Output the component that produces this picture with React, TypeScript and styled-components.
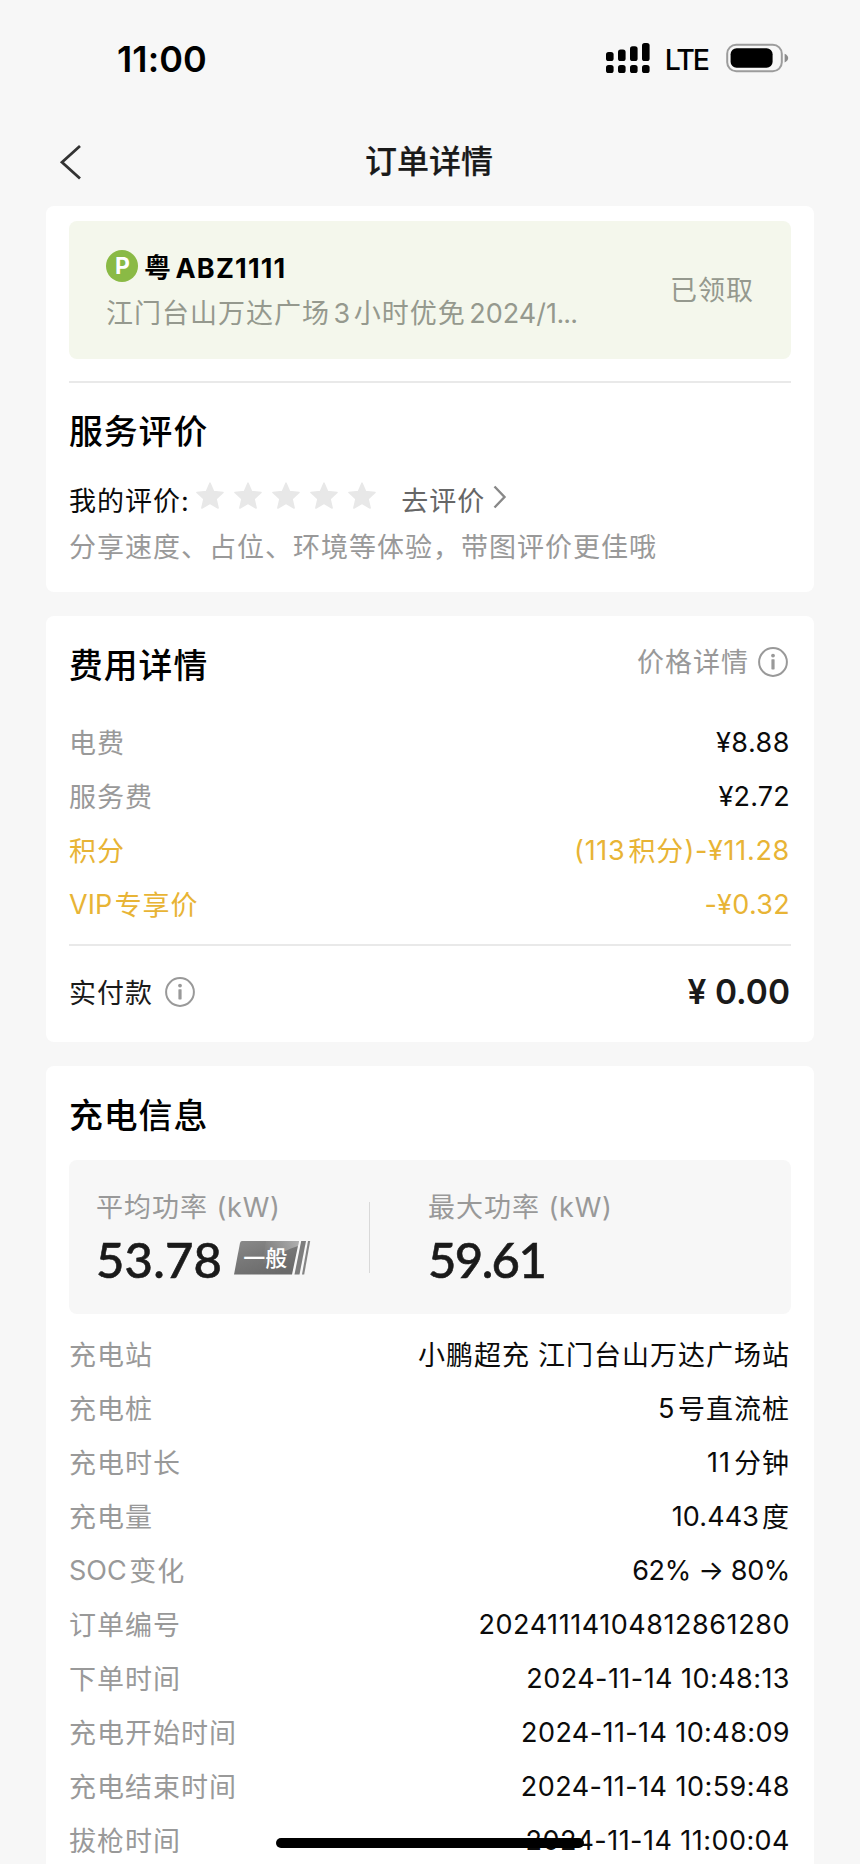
import React from "react";
import styled, { createGlobalStyle } from "styled-components";

const GlobalStyle = createGlobalStyle`
  * { box-sizing: border-box; }
  body {
    margin: 0;
    background: #f7f7f7;
    color: #0b0b0b;
    font-family: Inter, "Noto Sans CJK SC", sans-serif;
    font-size: 27px;
    -webkit-font-smoothing: antialiased;
  }
  svg { display: block; flex: none; }
`;

const Screen = styled.div`
  position: relative;
  width: 860px;
  height: 1864px;
  overflow: hidden;
  background: #f7f7f7;
`;

const StatusBar = styled.header`
  height: 116px;
  padding: 0 71px 0 117px;
  display: flex;
  align-items: center;
  justify-content: space-between;
`;

const Clock = styled.span`
  font-size: 36px;
  font-weight: 600;
  color: #000;
  letter-spacing: 0.1px;
  padding-top: 2px;
`;

const StatusIcons = styled.div`
  display: flex;
  align-items: center;
`;

const Network = styled.span`
  font-size: 28.5px;
  font-weight: 500;
  letter-spacing: -2px;
  color: #000;
  margin: 3px 18px 0 15px;
`;

const NavBar = styled.nav`
  height: 90px;
  display: grid;
  grid-template-columns: 200px 1fr 200px;
  align-items: center;
`;

const BackButton = styled.button`
  border: 0;
  background: none;
  padding: 2px 0 0 59px;
  text-align: left;
  line-height: 0;
`;

const NavTitle = styled.h1`
  margin: 0;
  padding: 2px 2px 0 0;
  text-align: center;
  font-size: 32px;
  font-weight: 500;
  line-height: 88px;
  color: #1a1a1a;
  -webkit-text-stroke: 0.2px #1a1a1a;
`;

const Card = styled.section<{ $height: number }>`
  height: ${(p) => p.$height}px;
  margin: 0 46px 24px;
  padding: 0 23px;
  background: #fff;
  border-radius: 8px;
`;

const CardTitle = styled.h2`
  margin: 0;
  font-size: 33.8px;
  font-weight: 500;
  letter-spacing: 1px;
  line-height: 50px;
  color: #000;
`;

const Divider = styled.hr`
  border: 0;
  margin: 0;
  height: 2px;
  background: #e9e9e9;
`;

const Coupon = styled.div`
  height: 138px;
  margin-bottom: 22px;
  padding: 0 37px;
  border-radius: 8px;
  background: #f4f7ec;
  display: flex;
  justify-content: space-between;
  align-items: center;
  color: #95998e;
`;

const CouponBody = styled.div`
  display: flex;
  flex-direction: column;
  padding-top: 1px;
`;

const CouponState = styled.span`
  padding-bottom: 3px;
`;

const Plate = styled.div`
  display: flex;
  align-items: center;
  gap: 6px;
  height: 45px;
  margin-bottom: 1px;
  font-weight: 700;
  color: #000;
`;

const ParkingMark = styled.span`
  width: 32px;
  height: 32px;
  border-radius: 50%;
  background: #8aba45;
  color: #fff;
  font-size: 23px;
  line-height: 32px;
  text-align: center;
  padding-left: 1px;
`;

const CouponNote = styled.div`
  line-height: 48px;
  white-space: nowrap;
`;

const RatingRow = styled.div`
  display: flex;
  align-items: center;
  height: 46px;
  color: #0b0b0b;
`;

const Stars = styled.div`
  display: flex;
  gap: 10px;
  margin: -6px 25px 0 7px;
`;

const RateLink = styled.a`
  display: flex;
  align-items: center;
  gap: 8px;
  color: #666;

  svg {
    margin-top: -3px;
    margin-bottom: 1px;
  }
`;

const Hint = styled.p`
  margin: 0;
  line-height: 52px;
  color: #999;
`;

const CardHead = styled.div`
  display: flex;
  justify-content: space-between;
  align-items: flex-start;
  padding: 25px 3px 0 0;
  height: 100px;
`;

const PriceLink = styled.a`
  display: flex;
  align-items: center;
  gap: 9px;
  height: 42px;
  line-height: 40px;
  padding-bottom: 1px;
  color: #999;

  > span {
    padding-top: 2px;
  }
`;

const Row = styled.div<{ $gold?: boolean }>`
  display: flex;
  justify-content: space-between;
  height: 54px;
  line-height: 54px;
  padding: 0 1px 0 0;
  color: ${(p) => (p.$gold ? "#e8b435" : "#0b0b0b")};
`;

const RowLabel = styled.span<{ $muted?: boolean }>`
  color: ${(p) => (p.$muted ? "#999" : "inherit")};
`;

const TotalRow = styled.div`
  display: flex;
  justify-content: space-between;
  align-items: center;
  height: 91px;
  padding: 0 1px 0 0;
  color: #1a1a1a;
`;

const TotalLabel = styled.span`
  display: flex;
  align-items: center;
  gap: 12px;
`;

const Total = styled.strong`
  font-size: 33.5px;
  font-weight: 600;
`;

const PowerPanel = styled.div`
  display: grid;
  grid-template-columns: 300px 1px 1fr;
  height: 154px;
  margin-bottom: 14px;
  border-radius: 8px;
  background: #f7f7f7;
`;

const PowerSplit = styled.i`
  height: 71px;
  margin-top: 42px;
  background: #d9d9d9;
`;

const PowerCell = styled.div<{ $left: number }>`
  padding: 25px 0 0 ${(p) => p.$left}px;
`;

const PowerLabel = styled.div`
  line-height: 46px;
  color: #999;
  white-space: nowrap;
`;

const PowerValue = styled.div<{ $tracking?: number }>`
  display: flex;
  align-items: center;
  gap: 12px;
  height: 56px;
  font-family: Lato, sans-serif;
  font-size: 49px;
  font-weight: 500;
  letter-spacing: ${(p) => p.$tracking ?? 0.2}px;
  color: #1a1a1a;
  -webkit-text-stroke: 0.6px #1a1a1a;
`;

const LevelBadge = styled.span`
  position: relative;
  display: block;
  width: 77px;
  height: 34px;
  margin-bottom: 2px;
  letter-spacing: 0;
  -webkit-text-stroke: 0;
`;

const LevelText = styled.span`
  position: absolute;
  left: 9px;
  top: 0;
  line-height: 31px;
  font-family: "Noto Sans CJK SC", sans-serif;
  font-size: 22px;
  font-weight: 500;
  color: #fff;
`;

const HomeIndicator = styled.div`
  position: absolute;
  left: 276px;
  bottom: 16px;
  width: 308px;
  height: 10px;
  border-radius: 5px;
  background: #000;
`;

const Run = styled.span<{ $spacing: number; $before: number; $han?: boolean }>`
  letter-spacing: ${(p) => p.$spacing}px;
  margin-left: ${(p) => p.$before}px;
  white-space: pre;

  ${Row} & {
    vertical-align: ${(p) => (p.$han ? "-1px" : "baseline")};
  }
`;

/* Splits a string into Han and Latin runs, each with its own tracking. */
function Mixed({ text, latin = 0.5, gap = 3 }: { text: string; latin?: number; gap?: number }) {
  const runs = text.match(/[\u3000-\u9fff\uff00-\uffef]+|[^\u3000-\u9fff\uff00-\uffef]+/g) || [];
  return (
    <span>
      {runs.map((run, i) => {
        const han = /[\u3000-\u9fff\uff00-\uffef]/.test(run);
        const prev = runs[i - 1] || " ";
        const join = i > 0 && /[0-9A-Z]/.test((han ? prev[prev.length - 1] : run[0]) || "");
        return (
          <Run key={i} $han={han} $spacing={han ? 1 : latin} $before={join ? gap : 0}>
            {run}
          </Run>
        );
      })}
    </span>
  );
}

function InfoIcon() {
  return (
    <svg width="30" height="30" viewBox="0 0 30 30">
      <circle cx="15" cy="15" r="13.9" fill="none" stroke="#999" strokeWidth="2" />
      <circle cx="15" cy="8.600" r="1.900" fill="#999" />
      <rect x="13.400" y="12.200" width="3.200" height="10.200" rx="0.600" fill="#999" />
    </svg>
  );
}

function Star() {
  return (
    <svg width="28" height="28" viewBox="0 0 28 28">
      <path
        d="M14 1.200 17.600 9.600 27 10.500 20 16.900 22.100 26 14 21.400 5.900 26 8 16.900 1 10.500 10.400 9.600Z"
        fill="#e8e8e8"
        stroke="#e8e8e8"
        strokeWidth="1.600"
        strokeLinejoin="round"
      />
    </svg>
  );
}

function Signal() {
  const tops = [9, 6.5, 3.2, 0];
  return (
    <svg width="44" height="30" viewBox="0 0 44 30">
      {tops.map((top, i) => (
        <g key={i}>
          <rect x={i * 12} y={top} width="7.600" height={18 - top} rx="2.600" />
          <rect x={i * 12} y="22" width="7.600" height="8" rx="2.600" />
        </g>
      ))}
    </svg>
  );
}

function Battery() {
  return (
    <svg width="63" height="30" viewBox="0 0 63 30">
      <rect x="1.200" y="1.700" width="54.600" height="26.600" rx="9" fill="none" stroke="#9c9c9c" strokeWidth="2" />
      <rect x="4.600" y="5.200" width="42" height="19.600" rx="6" />
      <path d="M58.600 10.700c2.400 1 3.600 2.600 3.600 4.400s-1.200 3.400-3.600 4.400Z" fill="#8c8c8c" />
    </svg>
  );
}

function Level() {
  return (
    <LevelBadge>
      <svg width="77" height="34" viewBox="0 0 77 34">
        <defs>
          <linearGradient id="level" x1="0" y1="0" x2="0.6" y2="1">
            <stop offset="0" stopColor="#8a8a8a" />
            <stop offset="0.5" stopColor="#787878" />
            <stop offset="1" stopColor="#6a6a6a" />
          </linearGradient>
          <linearGradient id="gloss" x1="0" y1="0" x2="1" y2="0">
            <stop offset="0" stopColor="#fff" stopOpacity="0" />
            <stop offset="1" stopColor="#fff" stopOpacity="0.4" />
          </linearGradient>
        </defs>
        <path d="M8 0H65L58 33.500H0L6 2Q6.500 0 8 0Z" fill="url(#level)" />
        <path d="M32 0H65L64 5C54 8 46 12 38 18L28 24Z" fill="url(#gloss)" />
        <path d="M67.200 0H72L65.500 33.500H60.500Z" fill="#7d7d7d" />
        <path d="M74 0H76.200L70.200 33.500H68Z" fill="#858585" />
      </svg>
      <LevelText>一般</LevelText>
    </LevelBadge>
  );
}

type Entry = { label: string; value: string; gold?: boolean; tracking?: number };

const fees: Entry[] = [
  { label: "电费", value: "¥8.88" },
  { label: "服务费", value: "¥2.72", tracking: 0.2 },
  { label: "积分", value: "(113积分)-¥11.28", gold: true, tracking: 0.7 },
  { label: "VIP专享价", value: "-¥0.32", gold: true, tracking: 0.3 },
];

const details: Entry[] = [
  { label: "充电站", value: "小鹏超充 江门台山万达广场站" },
  { label: "充电桩", value: "5号直流桩" },
  { label: "充电时长", value: "11分钟", tracking: 1 },
  { label: "充电量", value: "10.443度", tracking: 0.1 },
  { label: "SOC变化", value: "62% → 80%", tracking: -0.35 },
  { label: "订单编号", value: "20241114104812861280", tracking: 0.55 },
  { label: "下单时间", value: "2024-11-14 10:48:13", tracking: 0.45 },
  { label: "充电开始时间", value: "2024-11-14 10:48:09", tracking: 0.4 },
  { label: "充电结束时间", value: "2024-11-14 10:59:48", tracking: 0.45 },
  { label: "拔枪时间", value: "2024-11-14 11:00:04", tracking: 0.45 },
];

function EntryRow({ entry }: { entry: Entry }) {
  return (
    <Row $gold={entry.gold}>
      <RowLabel $muted={!entry.gold}>
        <Mixed text={entry.label} latin={0} gap={2.5} />
      </RowLabel>
      <Mixed text={entry.value} latin={entry.tracking} />
    </Row>
  );
}

const ServiceCard = styled(Card)`
  padding-top: 15px;
`;

const RatingTitle = styled(CardTitle)`
  margin: 24px 0 19px;
`;

const Fees = styled.div`
  margin-bottom: 12px;
`;

const ChargeHead = styled.div`
  height: 94px;
  padding-top: 25px;
`;

export default function App() {
  return (
    <Screen>
      <GlobalStyle />
      <StatusBar>
        <Clock>11:00</Clock>
        <StatusIcons>
          <Signal />
          <Network>LTE</Network>
          <Battery />
        </StatusIcons>
      </StatusBar>
      <NavBar>
        <BackButton aria-label="返回">
          <svg width="24" height="36" viewBox="0 0 24 36">
            <path d="M21 2 3 18.200 21 34.500" fill="none" stroke="#333" strokeWidth="2.800" />
          </svg>
        </BackButton>
        <NavTitle>订单详情</NavTitle>
      </NavBar>

      <ServiceCard $height={386}>
        <Coupon>
          <CouponBody>
            <Plate>
              <ParkingMark>P</ParkingMark>
              <Mixed text="粤ABZ1111" latin={1.2} gap={3.5} />
            </Plate>
            <CouponNote>
              <Mixed text="江门台山万达广场3小时优免2024/1" latin={0} gap={3.5} />
              <Run $spacing={-0.9} $before={-0.5}>...</Run>
            </CouponNote>
          </CouponBody>
          <CouponState>
            <Mixed text="已领取" />
          </CouponState>
        </Coupon>
        <Divider />
        <RatingTitle>服务评价</RatingTitle>
        <RatingRow>
          <Mixed text="我的评价:" />
          <Stars>
            {[1, 2, 3, 4, 5].map((n) => (
              <Star key={n} />
            ))}
          </Stars>
          <RateLink>
            <Mixed text="去评价" />
            <svg width="14" height="24" viewBox="0 0 14 24">
              <path d="M1.500 1.500 11.500 12 1.500 22.500" fill="none" stroke="#888" strokeWidth="2.400" />
            </svg>
          </RateLink>
        </RatingRow>
        <Hint>
          <Mixed text="分享速度、占位、环境等体验，带图评价更佳哦" />
        </Hint>
      </ServiceCard>

      <Card $height={426}>
        <CardHead>
          <CardTitle>费用详情</CardTitle>
          <PriceLink>
            <Mixed text="价格详情" />
            <InfoIcon />
          </PriceLink>
        </CardHead>
        <Fees>
          {fees.map((f) => (
            <EntryRow key={f.label} entry={f} />
          ))}
        </Fees>
        <Divider />
        <TotalRow>
          <TotalLabel>
            <Mixed text="实付款" />
            <InfoIcon />
          </TotalLabel>
          <Total>¥ 0.00</Total>
        </TotalRow>
      </Card>

      <Card $height={830}>
        <ChargeHead>
          <CardTitle>充电信息</CardTitle>
        </ChargeHead>
        <PowerPanel>
          <PowerCell $left={27}>
            <PowerLabel>
              <Mixed text="平均功率 (kW)" latin={0.8} />
            </PowerLabel>
            <PowerValue>
              53.78
              <Level />
            </PowerValue>
          </PowerCell>
          <PowerSplit />
          <PowerCell $left={58}>
            <PowerLabel>
              <Mixed text="最大功率 (kW)" latin={0.8} />
            </PowerLabel>
            <PowerValue $tracking={-1.6}>59.61</PowerValue>
          </PowerCell>
        </PowerPanel>
        {details.map((d) => (
          <EntryRow key={d.label} entry={d} />
        ))}
      </Card>
      <HomeIndicator />
    </Screen>
  );
}
